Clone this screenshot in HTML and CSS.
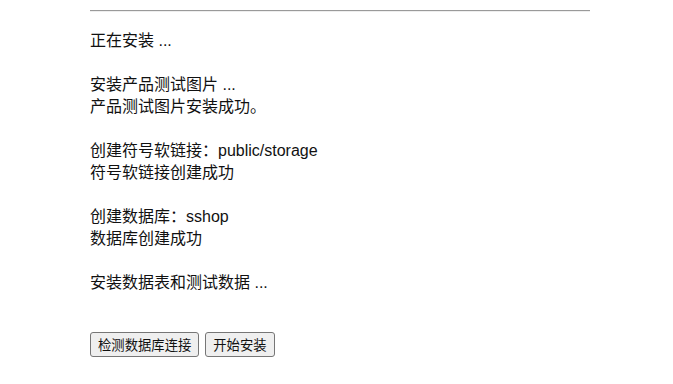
FILE: index.html
```html
<!DOCTYPE html>
<html lang="zh-CN">
<head>
  <meta charset="UTF-8">
  <title>安装</title>
  <link rel="stylesheet" href="styles.css">
</head>
<body>
  <div class="container">
    <hr class="rule">
    <div class="log">
      <p>正在安装 ...</p>
      <p>安装产品测试图片 ...<br>产品测试图片安装成功。</p>
      <p>创建符号软链接：public/storage<br>符号软链接创建成功</p>
      <p>创建数据库：sshop<br>数据库创建成功</p>
      <p>安装数据表和测试数据 ...</p>
    </div>
    <div class="actions">
      <button class="btn">检测数据库连接</button>
      <button class="btn">开始安装</button>
    </div>
  </div>
</body>
</html>
```

FILE: styles.css
```css
* {
  margin: 0;
  padding: 0;
  box-sizing: border-box;
}

body {
  font-family: "Liberation Sans", "Noto Sans CJK SC", sans-serif;
  background: #ffffff;
  color: #111111;
}

.container {
  width: 500px;
  margin-left: 90px;
  padding-top: 10px;
}

.rule {
  border: none;
  border-top: 1px solid #9a9a9a;
  border-bottom: 1px solid #eeeeee;
  height: 0;
}

.log {
  padding-top: 18px;
  font-size: 16px;
  line-height: 22px;
}

.log p + p {
  margin-top: 22px;
}

.actions {
  display: flex;
  gap: 6px;
  margin-top: 38px;
}

.btn {
  font-family: "Liberation Sans", "Noto Sans CJK SC", sans-serif;
  font-size: 13.33px;
  height: 25px;
  padding: 0 7px;
  background: #efefef;
  color: #111111;
  border: 1px solid #767676;
  border-radius: 3px;
}
```
